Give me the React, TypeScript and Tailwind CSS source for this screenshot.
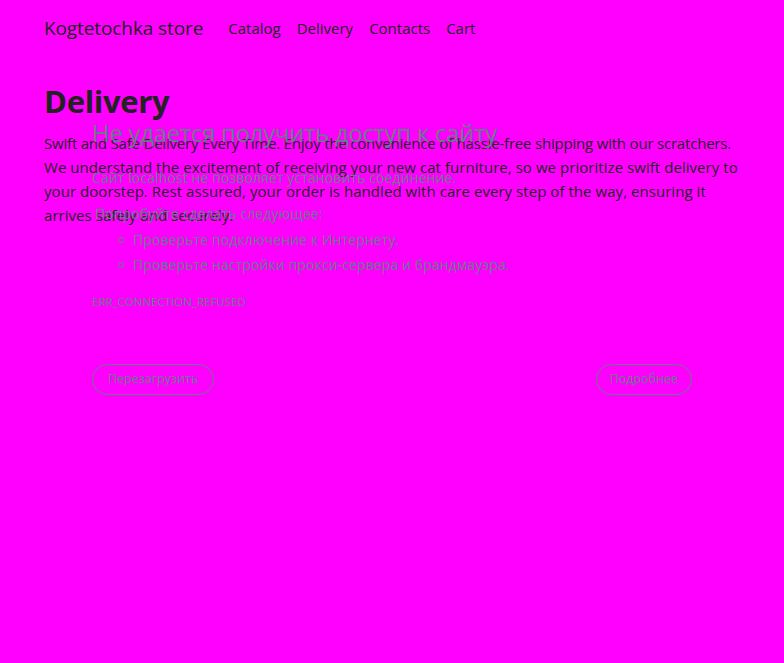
export default function App() {
  const overlay = "text-[#5f7f86]";
  return (
    <div className="relative min-h-[663px] w-full bg-[#ff00ff] font-['Open_Sans',sans-serif] text-[#222222]">
      {/* Store page */}
      <header className="flex items-center gap-[25px] px-[44px] pt-[14px]">
        <span className="text-[19px] tracking-[-0.1px]">Kogtetochka store</span>
        <nav className="flex gap-[16px] text-[15px]">
          <span>Catalog</span>
          <span>Delivery</span>
          <span>Contacts</span>
          <span>Cart</span>
        </nav>
      </header>

      <main className="px-[44px] pt-[40px]">
        <h1 className="text-[31px] font-bold leading-[36px] tracking-[-0.3px]">Delivery</h1>
        <p className="mt-[12px] max-w-[704px] text-[15px] leading-[24px] tracking-[0.05px]">
          <span className="block whitespace-nowrap tracking-[-0.2px]">
            Swift and Safe Delivery Every Time. Enjoy the convenience of hassle-free shipping with our scratchers.
          </span>
          We understand the excitement of receiving your new cat furniture, so we prioritize swift delivery to
          your doorstep. Rest assured, your order is handled with care every step of the way, ensuring it
          arrives safely and securely.
        </p>
      </main>

      {/* Browser error page drawn over it */}
      <div className={`absolute inset-0 pl-[92px] pt-[117px] ${overlay}`}>
        <div className="w-[600px]">
          <h2 className="text-[24px] leading-[32px] tracking-[-0.3px]">Не удается получить доступ к сайту</h2>
          <p className="mt-[19px] text-[14px] leading-[20px] tracking-[0.1px]">
            Сайт localhost не позволяет установить соединение.
          </p>
          <p className="mt-[16px] pl-[3px] text-[14px] leading-[20px] tracking-[0.1px]">Попробуйте сделать следующее:</p>
          <ul className="mt-[3px] text-[14px] leading-[25px] tracking-[0.1px]">
            <li className="flex items-center">
              <span className="ml-[26px] mr-[9px] inline-block h-[6px] w-[6px] rounded-full border border-current" />
              Проверьте подключение к Интернету.
            </li>
            <li className="flex items-center">
              <span className="ml-[26px] mr-[9px] inline-block h-[6px] w-[6px] rounded-full border border-current" />
              Проверьте настройки прокси-сервера и брандмауэра.
            </li>
          </ul>
          <div className="mt-[16px] text-[11.5px] uppercase">ERR_CONNECTION_REFUSED</div>
          <div className="mt-[54px] flex items-center justify-between">
            <button className="h-[31px] rounded-full border border-current px-[15px] text-[12.5px]">
              Перезагрузить
            </button>
            <button className="h-[31px] rounded-full border border-current px-[13px] text-[12.5px]">
              Подробнее
            </button>
          </div>
        </div>
      </div>
    </div>
  );
}
